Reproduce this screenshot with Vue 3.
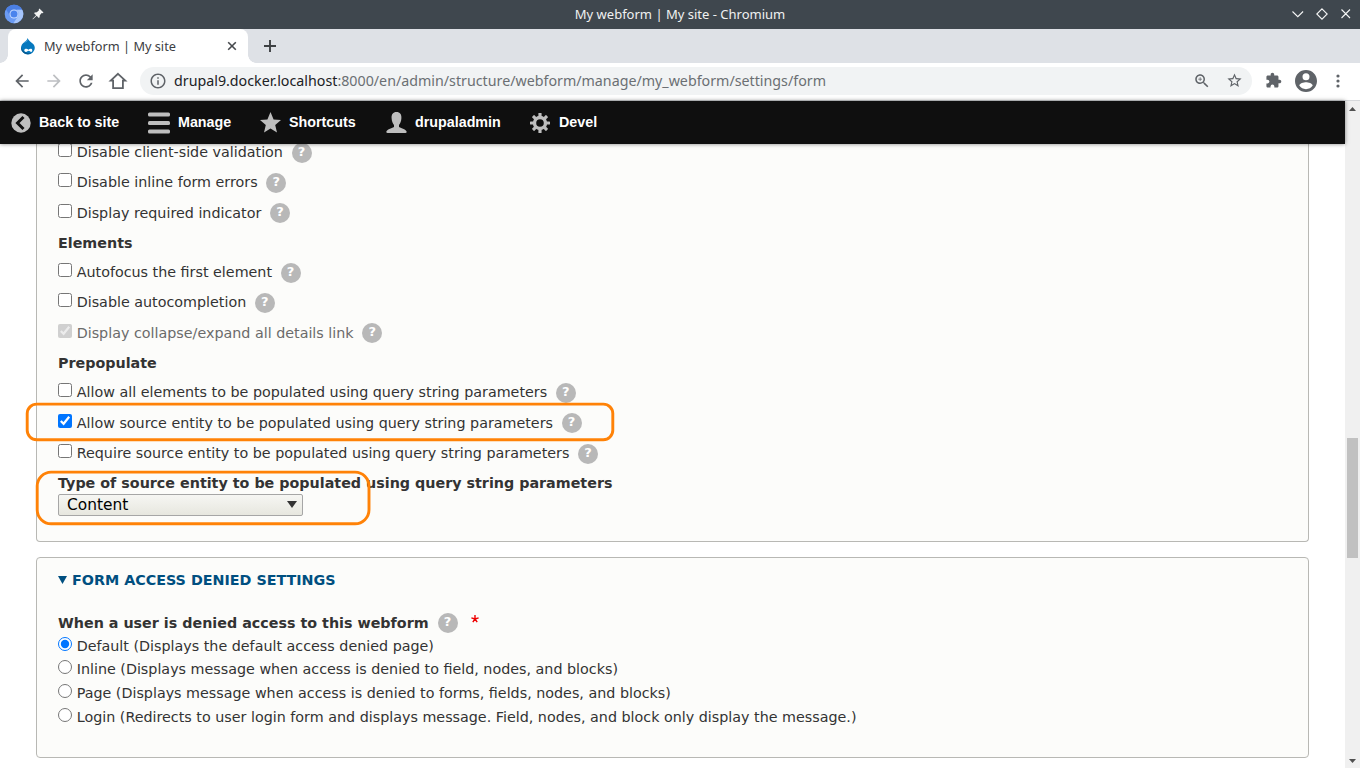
<script setup>
const rows = [
  { text: 'Disable client-side validation' },
  { text: 'Disable inline form errors', tall: true },
  { text: 'Display required indicator' , low: true },
  { heading: 'Elements' },
  { text: 'Autofocus the first element' },
  { text: 'Disable autocompletion', tall: true },
  { text: 'Display collapse/expand all details link', checked: true, disabled: true, low: true },
  { heading: 'Prepopulate' },
  { text: 'Allow all elements to be populated using query string parameters', tall: true },
  { text: 'Allow source entity to be populated using query string parameters', checked: true, low: true },
  { text: 'Require source entity to be populated using query string parameters' },
]
const options = [
  'Default (Displays the default access denied page)',
  'Inline (Displays message when access is denied to field, nodes, and blocks)',
  'Page (Displays message when access is denied to forms, fields, nodes, and blocks)',
  'Login (Redirects to user login form and displays message. Field, nodes, and block only display the message.)',
]
</script>

<template>
  <div class="window">
    <header class="titlebar">
      <svg class="app-icon" viewBox="0 0 20 20">
        <circle cx="10" cy="10" r="9.3" fill="#6b9bf4" />
        <path d="M2 5.3A9.3 9.3 0 0 1 18.2 5.7H10A4.5 4.5 0 0 0 5.8 11.5Z" fill="#4b7fe4" />
        <path d="M18.2 5.7A9.3 9.3 0 0 1 9.4 19.3L14 12.2Q15.8 8.3 12.5 5.7Z" fill="#a6c5fb" />
        <circle cx="10" cy="10" r="4.5" fill="#c4d9ff" />
        <circle cx="10" cy="10" r="3.5" fill="#4a83ed" />
      </svg>
      <svg class="pin" viewBox="0 0 12 12"><path d="M7.4.5 11.5 4.6 10.5 5.3 9.7 5 7.8 7.3 7.6 9.3 6.8 9.9 4.7 7.8 1 11.3.5 11.2.7 10.7 4.1 7.2 2.1 5.2 2.7 4.4 4.8 4.2 7 2.3 6.7 1.4Z" fill="#f2f3f3" /></svg>
      <span class="win-title">My webform | My site - Chromium</span>
      <svg class="win-buttons" viewBox="0 0 60 14" fill="none" stroke="#f4f5f5" stroke-width="1.1">
        <path d="M1.5 4.5 6.8 9.7 12.1 4.5M31 1.8 36.2 7 31 12.2 25.8 7ZM50.5 2.5 59 11M59 2.5 50.5 11" />
      </svg>
    </header>

    <div class="tabstrip">
      <div class="tab">
        <svg class="drop" viewBox="0 0 16 18">
          <path d="M7.400 1C7.600 4.600 1 5.500 1 11a6.800 6.300 0 0 0 13.800 0c0-4.500-4-5.300-5.600-7.500C8.500 2.700 7.800 1.800 7.400 1Z" fill="#0678be" />
          <path d="M1.100 10A6.900 6.300 0 0 0 11.500 16.300C7 16.500 2.300 14.500 1.100 10Z" fill="#075b91" />
          <path d="M4.700 4.800C6.500 4.500 7.400 3.400 7.500 2 8.200 4 6.600 5.400 3.800 5.700Z" fill="#5aa9db" />
          <path d="M4.300 13.300c0-1.700 2.700-2 4.100-.6 1-.8 1.900-1.200 2.900-.9 1.500.6 1.200 3.200-.1 3.200-.9 0-1.700-1.200-2.500-1.200-1 0-1.600 1.200-2.700 1.200-.9 0-1.700-.6-1.700-1.700Z" fill="#fff" />
        </svg>
        <span class="tab-title">My webform | My site</span>
        <svg class="close" viewBox="0 0 10 10"><path d="M1.2 1.2 8.8 8.8M8.8 1.2 1.2 8.8" stroke="#46494d" stroke-width="1.6" /></svg>
      </div>
      <svg class="plus" viewBox="0 0 12 12"><path d="M6 0V12M0 6H12" stroke="#3d4043" stroke-width="1.9" /></svg>
    </div>

    <div class="navbar">
      <svg class="nav" viewBox="0 0 24 24"><path d="M20 11H7.83l5.59-5.59L12 4l-8 8 8 8 1.41-1.41L7.83 13H20v-2z" fill="#5f6368" /></svg>
      <svg class="nav" viewBox="0 0 24 24"><path d="M12 4l-1.41 1.41L16.17 11H4v2h12.17l-5.58 5.59L12 20l8-8z" fill="#bdbfc2" /></svg>
      <svg class="nav" viewBox="0 0 24 24"><path d="M17.65 6.35C16.2 4.9 14.21 4 12 4c-4.42 0-7.99 3.58-7.99 8s3.57 8 7.99 8c3.73 0 6.84-2.55 7.73-6h-2.08c-.82 2.33-3.04 4-5.65 4-3.31 0-6-2.69-6-6s2.69-6 6-6c1.66 0 3.14.69 4.22 1.78L13 11h7V4l-2.35 2.35z" fill="#5f6368" /></svg>
      <svg class="nav" viewBox="0 0 20 20"><path d="M10 2.8 17.3 9.7H14.9V17.2H5.1V9.7H2.7Z" fill="none" stroke="#5f6368" stroke-width="1.8" /></svg>
      <div class="omnibox">
        <svg class="info" viewBox="0 0 24 24"><path d="M11 17h2v-6h-2v6zm1-15C6.48 2 2 6.48 2 12s4.48 10 10 10 10-4.48 10-10S17.52 2 12 2zm0 18c-4.41 0-8-3.59-8-8s3.59-8 8-8 8 3.59 8 8-3.59 8-8 8zM11 9h2V7h-2v2z" fill="#5f6368" /></svg>
        <span class="url"><b>drupal9.docker.localhost</b>:8000/en/admin/structure/webform/manage/my_webform/settings/form</span>
        <svg class="zoom" viewBox="0 0 24 24"><path d="M15.5 14h-.79l-.28-.27C15.41 12.59 16 11.11 16 9.5 16 5.91 13.09 3 9.5 3S3 5.91 3 9.5 5.91 16 9.5 16c1.61 0 3.09-.59 4.23-1.57l.27.28v.79l5 4.99L20.49 19l-4.99-5zm-6 0C7.01 14 5 11.99 5 9.5S7.01 5 9.5 5 14 7.01 14 9.5 11.99 14 9.5 14zm2.5-5h-2v-2H9v2H7v1h2v2h1v-2h2V9z" fill="#5f6368" /></svg>
        <svg class="bookmark" viewBox="0 0 24 24"><path d="M22 9.24l-7.19-.62L12 2 9.19 8.63 2 9.24l5.46 4.73L5.82 21 12 17.27 18.18 21l-1.63-7.03L22 9.24zM12 15.4l-3.76 2.27 1-4.28-3.32-2.88 4.38-.38L12 6.1l1.71 4.04 4.38.38-3.32 2.88 1 4.28L12 15.4z" fill="#5f6368" /></svg>
      </div>
      <svg class="puzzle" viewBox="0 0 24 24"><path d="M20.5 11H19V7c0-1.1-.9-2-2-2h-4V3.5C13 2.12 11.88 1 10.5 1S8 2.12 8 3.5V5H4c-1.1 0-1.99.9-1.99 2v3.8H3.5c1.49 0 2.7 1.21 2.7 2.7s-1.21 2.7-2.7 2.7H2V20c0 1.1.9 2 2 2h3.8v-1.5c0-1.49 1.21-2.7 2.7-2.7 1.49 0 2.7 1.21 2.7 2.7V22H17c1.1 0 2-.9 2-2v-4h1.5c1.38 0 2.5-1.12 2.5-2.5S21.88 11 20.5 11z" fill="#5f6368" /></svg>
      <svg class="avatar" viewBox="0 0 24 24"><path d="M12 1C5.9 1 1 5.9 1 12s4.9 11 11 11 11-4.900 11-11S18.100 1 12 1zm0 3.300a3.500 3.500 0 1 1 0 7 3.500 3.500 0 0 1 0-7zm0 15.900c-2.800 0-5.200-1.400-6.700-3.600.1-2.200 4.500-3.400 6.700-3.400s6.600 1.200 6.700 3.400c-1.500 2.200-3.900 3.600-6.700 3.600z" fill="#5f6368" /></svg>
      <svg class="more" viewBox="0 0 4 14" fill="#5f6368"><circle cx="2" cy="2" r="1.6" /><circle cx="2" cy="7" r="1.6" /><circle cx="2" cy="12" r="1.6" /></svg>
    </div>

    <div class="viewport">
      <div class="page">
        <nav class="toolbar">
          <a class="item back"><svg viewBox="0 0 20 20"><circle cx="10" cy="10" r="9.7" fill="#bebebe" /><path d="M12.500 4 6.500 10l6 6" fill="none" stroke="#0f0f0f" stroke-width="3" /></svg>Back to site</a>
          <a class="item manage"><svg viewBox="0 0 22 22" fill="#bebebe"><rect y="0.500" width="22" height="4" rx="1.500" /><rect y="9" width="22" height="4" rx="1.500" /><rect y="17.500" width="22" height="4" rx="1.500" /></svg>Manage</a>
          <a class="item shortcuts"><svg viewBox="0 0 21 21"><path d="M10.500 0 13.600 7.500 21 8 15.200 13.100 17 20.600 10.500 16.600 4 20.600 5.800 13.100 0 8 7.400 7.500Z" fill="#bebebe" /></svg>Shortcuts</a>
          <a class="item user"><svg viewBox="0 0 21 21"><path d="M10.500 0C7 0 5.300 2.500 5.600 6.200 5.800 9.500 6.800 11.500 8 13v1.900C5.500 16.600.8 17 .3 19.700Q.3 21 1.600 21H19.400q1.300 0 1.300-1.300C20.200 17 15.500 16.600 13 14.900V13c1.200-1.500 2.200-3.500 2.400-6.800C15.700 2.500 14 0 10.500 0Z" fill="#bebebe" /></svg>drupaladmin</a>
          <a class="item devel"><svg viewBox="0 0 20 20"><g fill="#bebebe"><rect v-for="n in 8" :key="n" x="8.400" y="0" width="3.200" height="5" rx=".6" :transform="`rotate(${n * 45} 10 10)`" /></g><circle cx="10" cy="10" r="5.500" fill="none" stroke="#bebebe" stroke-width="3.400" /></svg>Devel</a>
        </nav>

        <main class="content">
          <section class="panel settings">
            <template v-for="(row, i) in rows" :key="i">
              <h4 v-if="row.heading" class="group">{{ row.heading }}</h4>
              <label v-else class="row" :class="{ tall: row.tall, low: row.low, off: row.disabled }">
                <input type="checkbox" :checked="row.checked" :disabled="row.disabled" />
                <span>{{ row.text }}</span><i class="help">?</i>
              </label>
            </template>
            <h4 class="group type">Type of source entity to be populated using query string parameters</h4>
            <div class="select">Content<svg viewBox="0 0 10 7"><path d="M0 0H10L5 7Z" fill="#333" /></svg></div>
          </section>

          <section class="panel access">
            <h3 class="summary"><svg viewBox="0 0 9 8"><path d="M0 0H9L4.500 8Z" fill="#004f80" /></svg>FORM ACCESS DENIED SETTINGS</h3>
            <h4 class="legend">When a user is denied access to this webform<i class="help">?</i><svg class="required" viewBox="0 0 8 8"><path d="M4 0V4M.4 2.900 4 4 7.600 2.900M4 4 1.800 7.200M4 4 6.200 7.200" fill="none" stroke="#e00" stroke-width="1.400" /></svg></h4>
            <label v-for="(o, i) in options" :key="o" class="radio">
              <input type="radio" name="denied" :checked="i === 0" /><span>{{ o }}</span>
            </label>
          </section>
        </main>
      </div>
      <div class="scrollbar">
        <svg viewBox="0 0 7 4"><path d="M0 4H7L3.500 0Z" fill="#505050" /></svg>
        <div class="thumb"></div>
        <svg viewBox="0 0 7 4"><path d="M0 0H7L3.500 4Z" fill="#505050" /></svg>
      </div>
    </div>

    <svg class="marks" viewBox="0 0 1360 768" fill="none" stroke="#ff8207" stroke-width="2.900">
      <rect x="27.200" y="404.100" width="585.600" height="35.700" rx="9.500" />
      <rect x="37.200" y="472.100" width="331.800" height="51.700" rx="14" />
    </svg>
  </div>
</template>

<style>
body { margin: 0; overflow: hidden; }
</style>

<style scoped>
* { box-sizing: border-box; }
svg { display: block; flex: none; }
h3, h4 { margin: 0; font-weight: bold; }
.window { position: relative; width: 1360px; height: 768px; display: flex; flex-direction: column; overflow: hidden; background: #fff; font-family: "Noto Sans", sans-serif; }

.titlebar { height: 29px; display: flex; align-items: center; padding: 0 9px 1px 4px; background: #3f474e; color: #f0f1f1; font-size: 13px; }
.app-icon { width: 20px; height: 20px; }
.pin { width: 12px; height: 12px; margin-left: 8px; }
.win-title { flex: 1; text-align: center; padding-left: 25px; line-height: 28px; }
.win-buttons { width: 60px; height: 14px; }

.tabstrip { height: 34px; display: flex; background: #dee1e6; }
.tab { position: relative; width: 240px; margin-left: 8px; display: flex; align-items: center; padding: 0 11px 0 12px; border-radius: 8px 8px 0 0; background: #fff; }
.tab::before, .tab::after { content: ""; position: absolute; bottom: 0; width: 8px; height: 8px; }
.tab::before { left: -8px; background: radial-gradient(circle at 0 0, transparent 7.500px, #fff 8px); }
.tab::after { right: -8px; background: radial-gradient(circle at 100% 0, transparent 7.500px, #fff 8px); }
.drop { width: 16px; height: 18px; }
.tab-title { flex: 1; margin-left: 8px; font-size: 12.750px; line-height: 34px; color: #3c4043; }
.close { width: 10px; height: 10px; }
.plus { width: 12px; height: 12px; margin: 11px 0 0 16px; }

.navbar { height: 38px; display: flex; align-items: center; padding: 0 20px 2px 12px; border-bottom: 1px solid #d6d8db; background: #fff; }
.nav { width: 20px; height: 20px; margin-right: 12px; }
.omnibox { flex: 1; height: 28px; display: flex; align-items: center; padding: 0 9px 0 9px; border-radius: 14px; background: #f1f3f4; }
.info { width: 18px; height: 18px; }
.url { flex: 1; margin-left: 7px; font-size: 14.250px; line-height: 28px; color: #6b6f73; white-space: nowrap; }
.url b { font-weight: normal; color: #202124; }
.zoom { width: 18px; height: 18px; }
.bookmark { width: 17px; height: 17px; margin: 0 0 0 15px; }
.puzzle { width: 17px; height: 17px; margin-left: 13px; }
.avatar { width: 24px; height: 24px; margin-left: 12px; }
.more { width: 4px; height: 14px; margin: 1px 0 0 18px; }

.viewport { flex: 1; display: flex; min-height: 0; font-family: "DejaVu Sans", sans-serif; font-size: 14.300px; color: #333; }
.page { flex: 1; display: flex; flex-direction: column; min-width: 0; }
.toolbar { position: relative; z-index: 1; height: 43px; flex: none; display: flex; align-items: flex-start; background: #0f0f0f; color: #fff; font: bold 14.300px/42px "Liberation Sans", sans-serif; box-shadow: 0 0 4px rgba(0, 0, 0, .5); }
.item { display: flex; align-items: center; height: 42px; white-space: nowrap; }
.item svg { height: 22px; width: 22px; margin-top: 1px; }
.back { width: 148px; padding-left: 11px; gap: 8px; }
.back svg { width: 20px; height: 20px; margin-top: 2px; }
.manage { width: 112px; gap: 8px; }
.shortcuts { width: 126px; gap: 8px; }
.shortcuts svg, .user svg { width: 21px; height: 21px; }
.user { width: 144px; gap: 8px; }
.devel { gap: 9px; }
.devel svg { width: 20px; height: 20px; margin-top: 2px; }

.content { flex: 1; min-height: 0; padding: 0 36px; overflow: hidden; }
.panel { display: flow-root; width: 1273px; padding-left: 21px; border: 1px solid #b8b8b4; border-radius: 4px; background: #fcfcfa; }
.settings { height: 398px; border-top: 0; border-radius: 0 0 4px 4px; }
.row { display: flex; height: 30px; line-height: 17px; padding-top: 8px; white-space: nowrap; }
.row:first-child { margin-top: -9px; }
.tall { height: 31px; }
.row input, .radio input { flex: none; width: 14px; height: 14px; margin: 0 4.700px 0 0; }
.row span { padding-top: 1px; }
.off { color: #6b6b6b; }
.help { flex: none; width: 20px; height: 20px; margin-left: 8.600px; border-radius: 50%; background: #b8b8b8; color: #fff; font: bold 13px/18px "DejaVu Sans", sans-serif; text-align: center; }
.low .help { margin-top: -1px; }
.group { height: 29px; padding-top: 9px; line-height: 17px; font-size: 14.300px; }
.type { height: 28px; }
.select { width: 245px; height: 22px; display: flex; align-items: center; justify-content: space-between; padding: 0 5px 0 8px; border: 1px solid #a6a6a6; border-radius: 2px; background: linear-gradient(#f6f6f3, #e7e7df); color: #000; font-size: 15.400px; line-height: 20px; }
.select svg { width: 10px; height: 7px; margin-top: -1px; }

.access { height: 201px; margin-top: 15px; }
.summary { display: flex; align-items: center; height: 17px; margin-top: 14px; font-size: 14.300px; line-height: 17px; color: #004f80; }
.summary svg { width: 9px; height: 8px; margin: -1px 5px 0 0; }
.legend { display: flex; height: 24px; margin-top: 24px; font-size: 14.300px; line-height: 20px; }
.legend .help { margin-left: 9px; }
.required { width: 8px; height: 8px; margin: 2px 0 0 13px; }
.radio { display: flex; height: 24px; line-height: 17px; white-space: nowrap; }
.radio:first-of-type { height: 23px; }
.radio span { padding-top: 1px; }

.scrollbar { width: 15px; display: flex; flex-direction: column; align-items: center; padding: 6px 0 5px; background: #f0f0f0; }
.scrollbar svg { width: 7px; height: 4px; }
.thumb { width: 11px; height: 120px; margin: 327px 0 auto; background: #c1c1c1; }

.marks { position: absolute; inset: 0; width: 1360px; height: 768px; pointer-events: none; }
</style>
